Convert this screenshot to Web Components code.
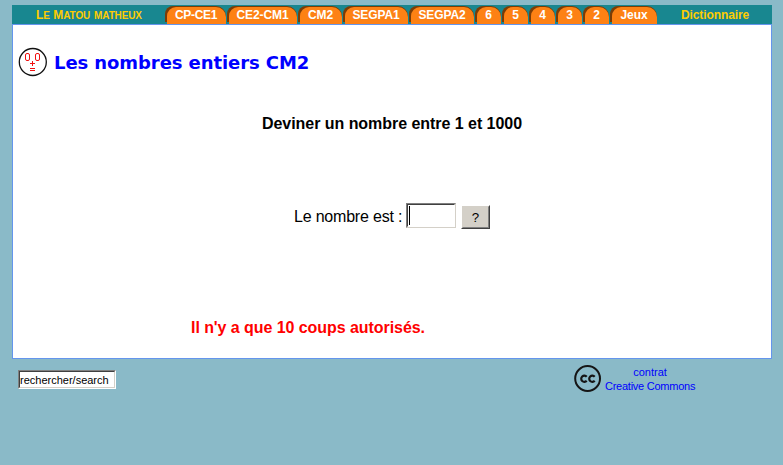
<!DOCTYPE html>
<html lang="fr"><head><meta charset="utf-8"><title>Le Matou matheux</title>
<style>html,body{margin:0;height:100%;background:#8abac8;overflow:hidden}</style></head>
<body><matou-page></matou-page>
<script>
const define=(name,html)=>customElements.define(name,class extends HTMLElement{
  constructor(){super();this.attachShadow({mode:'open'}).innerHTML=html;}
});
define('nav-tab',`<style>
:host{display:block;box-sizing:border-box;height:19px;padding-top:1px;margin-right:1px;width:var(--w)}
.shade{height:15px;background:#7b3c06;border-radius:8px 10px 0 0;padding:1px 0 0 2px}
.face{box-sizing:border-box;height:17px;padding-right:1px;background:#fd8114;border-radius:9px 10px 0 0;display:flex;justify-content:center;color:#fff;font:bold 12px/17px "Liberation Sans",sans-serif;letter-spacing:var(--ls,-.1px);white-space:nowrap}
</style><div class="shade"><div class="face"><slot></slot></div></div>`);
define('nav-bar',`<style>
:host{display:flex;height:19px;background:#188790;font:bold 12px/20px "Liberation Sans",sans-serif;color:#fc0;white-space:nowrap}
.brand{width:129px;padding-left:24px;}
.brand span{font-size:14.4px;line-height:1;font-variant:small-caps;letter-spacing:-.12px}
.dico{padding-left:23px;letter-spacing:-.1px}
</style><div class="brand">L<span>e</span> M<span>atou matheux</span></div>
<nav-tab style="--w:61px;--ls:-.3px">CP-CE1</nav-tab><nav-tab style="--w:70px">CE2-CM1</nav-tab><nav-tab style="--w:44px">CM2</nav-tab><nav-tab style="--w:65px">SEGPA1</nav-tab><nav-tab style="--w:65px">SEGPA2</nav-tab><nav-tab style="--w:26px">6</nav-tab><nav-tab style="--w:26px">5</nav-tab><nav-tab style="--w:26px">4</nav-tab><nav-tab style="--w:26px">3</nav-tab><nav-tab style="--w:26px">2</nav-tab><nav-tab style="--w:47px">Jeux</nav-tab><span class="dico">Dictionnaire</span>`);
define('cat-face',`<style>:host{display:block;width:30px;height:30px}svg{display:block}</style>
<svg width="30" height="30" viewBox="0 0 30 30" fill="none"><circle cx="14.800" cy="15" r="13.500" fill="#fff" stroke="#111" stroke-width="1.3"/><g stroke="#f01010"><rect x="7.5" y="6.5" width="4" height="7" rx="1.5"/><rect x="17.5" y="6.5" width="4" height="7" rx="1.5"/><path d="M12 16.500h5M14.500 14v5M12 21.500h5M12 23.500h5"/></g></svg>`);
define('number-field',`<style>
:host{display:block;box-sizing:border-box;width:50px;height:25px;border:1px solid;border-color:#808080 #d4d0c8 #d4d0c8 #808080;background:#fff}
div{box-sizing:border-box;height:23px;border:1px solid;border-color:#404040 #fff #fff #404040;padding:1px}
i{display:block;width:1px;height:19px;background:#000}
</style><div><i></i></div>`);
define('guess-button',`<style>
:host{display:block;box-sizing:border-box;width:29px;height:24px;border:1px solid;border-color:#fff #404040 #404040 #fff;background:#d4d0c8}
div{box-sizing:border-box;height:22px;border:1px solid;border-color:#d4d0c8 #808080 #808080 #d4d0c8;text-align:center;font:13.33px/21px "Liberation Sans",sans-serif}
</style><div><slot></slot></div>`);
define('exercise-card',`<style>
:host{display:flex;flex-direction:column;box-sizing:border-box;height:335px;border:1px solid #6495ed;background:#fff;font:16px/20px "Liberation Sans",sans-serif;color:#000;white-space:nowrap}
header{display:flex;align-items:flex-start;height:30px;margin:22px 0 0 5px;gap:6px}
h1{margin:0;font:bold 18px/32px "DejaVu Sans",sans-serif;color:#00f;letter-spacing:-.08px}
h2{margin:37px 0 0;text-align:center;font:bold 16px/20px "Liberation Sans",sans-serif;letter-spacing:-.04px}
.ask{display:flex;margin:69px 0 0 281px;height:26px}
.ask span{width:112px;line-height:28px;letter-spacing:-.2px}
guess-button{margin:2px 0 0 5px}
.note{margin:89px 0 0 178px;color:#f00;font-weight:bold;letter-spacing:-.06px}
</style><header><cat-face></cat-face><h1>Les nombres entiers CM2</h1></header>
<h2>Deviner un nombre entre 1 et 1000</h2>
<div class="ask"><span>Le nombre est :</span><number-field></number-field><guess-button>?</guess-button></div>
<div class="note">Il n'y a que 10 coups autorisés.</div>`);
define('search-field',`<style>
:host{display:block;box-sizing:border-box;width:98px;height:19px;border:1px solid;border-color:#808080 #fff #fff #808080;background:#fff}
div{box-sizing:border-box;height:17px;border:1px solid;border-color:#404040 #d4d0c8 #d4d0c8 #404040;font:11px/17px "Liberation Sans",sans-serif;white-space:nowrap}
</style><div>rechercher/search</div>`);
define('cc-logo',`<style>:host{display:block;width:28px;height:28px}svg{display:block}</style>
<svg width="28" height="28" viewBox="0 0 28 28" fill="none" stroke="#151515"><circle cx="13.600" cy="13.500" r="12.400" stroke-width="2"/><path d="M12.700 11.700A3.100 3.100 0 1 0 12.700 15.700M20.700 11.700A3.100 3.100 0 1 0 20.700 15.700" stroke-width="2.200"/></svg>`);
define('page-footer',`<style>
:host{display:flex;padding:6px 0 0 6px}
search-field{margin-top:5px}
cc-logo{margin-left:458px}
.lic{width:90px;margin-left:3px;text-align:center;color:#00f;font:11px/14px "Liberation Sans",sans-serif;white-space:nowrap}
.lic span{letter-spacing:-.25px}
</style><search-field></search-field><cc-logo></cc-logo><div class="lic">contrat<br><span>Creative Commons</span></div>`);
define('matou-page',`<style>:host{display:block;width:760px;padding:5px 0 0 12px}</style>
<nav-bar></nav-bar><exercise-card></exercise-card><page-footer></page-footer>`);
</script></body></html>
